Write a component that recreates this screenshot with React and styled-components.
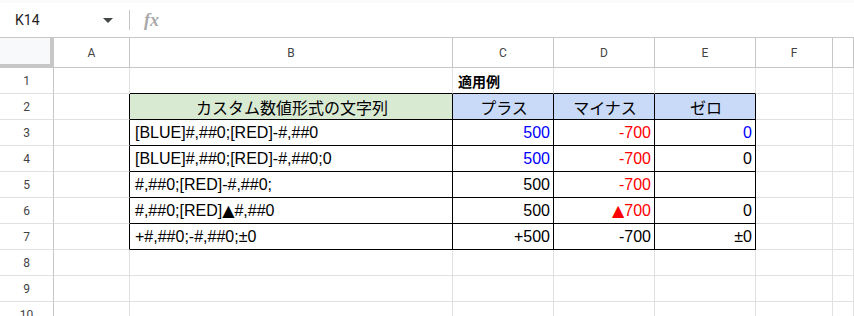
import React from "react";
import styled, { createGlobalStyle } from "styled-components";

const Global = createGlobalStyle`
  html, body { margin: 0; padding: 0; background: #fff; overflow: hidden; }
  body { width: 854px; height: 316px; font-family: "Liberation Sans", Arial, sans-serif; }
`;

const Page = styled.div`
  width: 854px;
  height: 316px;
  overflow: hidden;
  display: flex;
  flex-direction: column;
`;

const TopStrip = styled.div`
  height: 3px;
  background: #f9fbfd;
  flex: none;
`;

const FormulaBar = styled.div`
  height: 35px;
  flex: none;
  box-sizing: border-box;
  border-bottom: 1px solid #c4c7c5;
  display: flex;
  align-items: center;
  background: #fff;
`;

const NameBox = styled.div`
  width: 129px;
  box-sizing: border-box;
  padding: 0 15px;
  display: flex;
  align-items: center;
  justify-content: space-between;
  font-family: Roboto, "Liberation Sans", sans-serif;
  font-size: 14px;
  color: #1f1f1f;
`;

const Caret = styled.span`
  width: 0;
  height: 0;
  border-left: 5px solid transparent;
  border-right: 5px solid transparent;
  border-top: 5px solid #444746;
  margin-right: 1px;
`;

const Divider = styled.div`
  width: 1px;
  height: 20px;
  background: #c4c7c5;
`;

const Fx = styled.span`
  margin-left: 14px;
  font-family: "Liberation Serif", serif;
  font-style: italic;
  font-weight: 700;
  font-size: 18px;
  color: #a9a9a9;
`;

const Grid = styled.div`
  display: grid;
  grid-template-columns: 54px 76px 323px 101px 101px 101px 77px 1fr;
  grid-template-rows: 30px repeat(10, 26px);
`;

const Corner = styled.div`
  box-sizing: border-box;
  background: #f8f9fa;
  border-right: 4px solid #c7c7c7;
  border-bottom: 4px solid #c7c7c7;
`;

const ColHead = styled.div`
  box-sizing: border-box;
  border-right: 1px solid #c7c7c7;
  border-bottom: 1px solid #c7c7c7;
  display: flex;
  align-items: center;
  justify-content: center;
  font-family: Roboto, "Liberation Sans", sans-serif;
  font-size: 12px;
  color: #444;
  background: #fff;
`;

const RowHead = styled.div`
  box-sizing: border-box;
  border-right: 1px solid #c7c7c7;
  border-bottom: 1px solid #e1e1e1;
  display: flex;
  align-items: center;
  justify-content: center;
  font-family: Roboto, "Liberation Sans", sans-serif;
  font-size: 12px;
  color: #444;
  background: #fff;
`;

const Cell = styled.div`
  box-sizing: border-box;
  border-right: 1px solid ${(p) => (p.$br ? "#000" : "#e1e1e1")};
  border-bottom: 1px solid ${(p) => (p.$bb ? "#000" : "#e1e1e1")};
  background: ${(p) => p.$bg || "#fff"};
  display: flex;
  align-items: center;
  justify-content: ${(p) =>
    p.$align === "right" ? "flex-end" : p.$align === "center" ? "center" : "flex-start"};
  padding: 0 3px 0 5px;
  white-space: nowrap;
  overflow: hidden;
  font-family: ${(p) =>
    p.$cjk
      ? `"Noto Sans CJK JP", "Liberation Sans", sans-serif`
      : `"Liberation Sans", Arial, "DejaVu Sans", sans-serif`};
  font-size: ${(p) => (p.$small ? "14px" : "16px")};
  font-weight: ${(p) => (p.$bold ? 700 : 400)};
  color: ${(p) => p.$color || "#000"};
`;

const Tri = styled.span`
  font-family: "DejaVu Sans", sans-serif;
  font-size: 16px;
`;

const GREEN = "#d9ead3";
const BLUE_BG = "#c9daf8";
const BLUE = "#0000ff";
const RED = "#ff0000";

const cols = ["A", "B", "C", "D", "E", "F", ""];

const rows = [
  null,
  null,
  {
    fmt: "[BLUE]#,##0;[RED]-#,##0",
    c: ["500", BLUE],
    d: ["-700", RED],
    e: ["0", BLUE],
  },
  {
    fmt: "[BLUE]#,##0;[RED]-#,##0;0",
    c: ["500", BLUE],
    d: ["-700", RED],
    e: ["0", "#000"],
  },
  {
    fmt: "#,##0;[RED]-#,##0;",
    c: ["500", "#000"],
    d: ["-700", RED],
    e: ["", "#000"],
  },
  {
    fmt: (
      <>
        #,##0;[RED]<Tri>▲</Tri>#,##0
      </>
    ),
    c: ["500", "#000"],
    d: [
      <>
        <Tri>▲</Tri>700
      </>,
      RED,
    ],
    e: ["0", "#000"],
  },
  {
    fmt: "+#,##0;-#,##0;±0",
    c: ["+500", "#000"],
    d: ["-700", "#000"],
    e: ["±0", "#000"],
  },
];

function renderRow(i) {
  const n = i + 1;
  const inTable = n >= 2 && n <= 7;
  const out = [<RowHead key={`h${n}`}>{n}</RowHead>];
  out.push(<Cell key={`a${n}`} $br={inTable} />);
  if (n === 1) {
    out.push(<Cell key="b1" $bb />);
    out.push(
      <Cell key="c1" $bb $bold $cjk $small>
        適用例
      </Cell>
    );
    out.push(<Cell key="d1" $bb />);
    out.push(<Cell key="e1" $bb />);
  } else if (n === 2) {
    out.push(
      <Cell key="b2" $br $bb $bg={GREEN} $align="center" $cjk>
        カスタム数値形式の文字列
      </Cell>
    );
    ["プラス", "マイナス", "ゼロ"].forEach((t, k) =>
      out.push(
        <Cell key={`h2${k}`} $br $bb $bg={BLUE_BG} $align="center" $cjk>
          {t}
        </Cell>
      )
    );
  } else if (inTable) {
    const r = rows[i];
    out.push(
      <Cell key={`b${n}`} $br $bb>
        {r.fmt}
      </Cell>
    );
    [r.c, r.d, r.e].forEach(([v, col], k) =>
      out.push(
        <Cell key={`v${n}${k}`} $br $bb $align="right" $color={col}>
          {v}
        </Cell>
      )
    );
  } else {
    ["b", "c", "d", "e"].forEach((c) => out.push(<Cell key={`${c}${n}`} />));
  }
  out.push(<Cell key={`f${n}`} />);
  out.push(<Cell key={`g${n}`} />);
  return out;
}

export default function App() {
  return (
    <Page>
      <Global />
      <TopStrip />
      <FormulaBar>
        <NameBox>
          <span>K14</span>
          <Caret />
        </NameBox>
        <Divider />
        <Fx>fx</Fx>
      </FormulaBar>
      <Grid>
        <Corner />
        {cols.map((c, i) => (
          <ColHead key={i}>{c}</ColHead>
        ))}
        {Array.from({ length: 10 }, (_, i) => renderRow(i))}
      </Grid>
    </Page>
  );
}
